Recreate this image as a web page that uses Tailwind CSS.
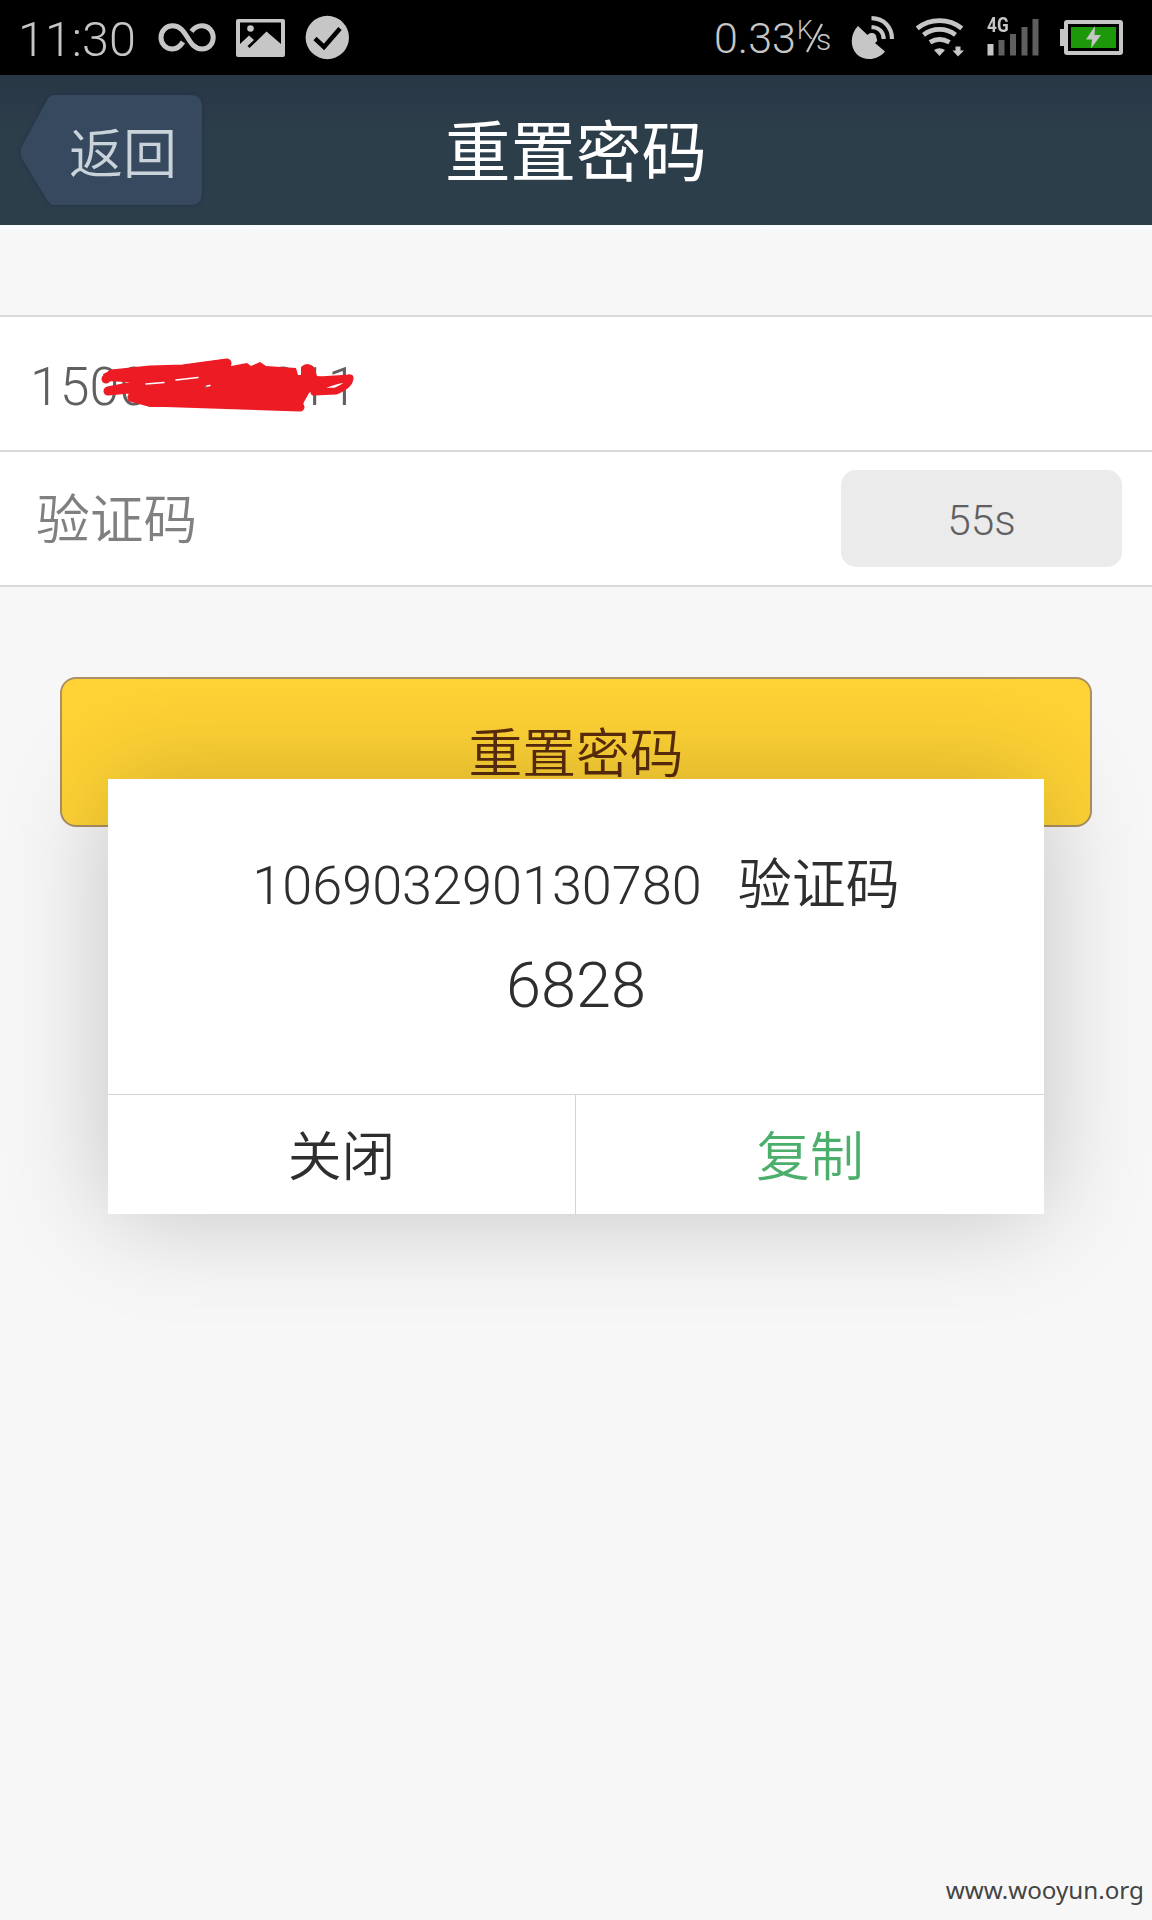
<!DOCTYPE html>
<html lang="zh-CN">
<head>
<meta charset="utf-8">
<title>重置密码</title>
<script src="https://cdn.jsdelivr.net/npm/@tailwindcss/browser@4"></script>
</head>
<body class="bg-[#f7f7f7]">
<div class="relative flex h-[1920px] w-[1152px] flex-col overflow-hidden bg-[#f7f7f7] font-['Roboto','Noto_Sans_CJK_SC',sans-serif] font-light">

  <!-- status bar -->
  <div class="flex h-[75px] items-center bg-black text-[#c6c6c6]">
    <span class="ml-[18px] w-[138px] pt-[4px] text-[48.500px] leading-[75px]">11:30</span>
    <svg class="h-[75px] w-[62px]" viewBox="156 0 62 75" fill="none" stroke="#c6c6c6" stroke-width="5"><path d="M183 42C180 46.500 176.500 49 172.500 49C166 49 161 44 161 37.500C161 31 166 25.800 172.500 25.800C188 25.800 187 49 202 49C208.500 49 213.200 44 213.200 37.500C213.200 31 208.500 25.800 202 25.800C197.500 25.800 194 28 191.500 31.500"/></svg>
    <svg class="ml-[16px] h-[75px] w-[53px]" viewBox="234 0 53 75"><rect x="236" y="19" width="49" height="38" rx="2" fill="#c6c6c6"/><path d="M240 22.500H281V44L266.500 31.500L249.500 48L247.500 46L254 40L249 35.500L240 44Z" fill="#000"/><circle cx="250.500" cy="28.500" r="3.300" fill="#c6c6c6"/></svg>
    <svg class="ml-[16px] h-[75px] w-[48px]" viewBox="303 0 48 75"><circle cx="327.300" cy="37.500" r="21.700" fill="#c6c6c6"/><path d="M315 38.500L324 47L340 28.500" fill="none" stroke="#000" stroke-width="4.500"/></svg>
    <span class="ml-[363px] w-[82px] pt-[1px] text-[43px] leading-[75px]">0.33</span>
    <span class="relative flex h-[75px] w-[41px]">
      <span class="absolute top-[17px] left-[1px] text-[25px] leading-[28px] font-light">K</span>
      <svg class="absolute top-[22px] left-[9px]" width="20" height="32" viewBox="0 0 20 32"><path d="M2 30L17 2" stroke="#c6c6c6" stroke-width="2.200"/></svg>
      <span class="absolute top-[24px] left-[20px] text-[30px] leading-[32px] font-light">s</span>
    </span>
    <svg class="ml-[13px] h-[75px] w-[46px]" viewBox="850 0 46 75" fill="#c6c6c6"><path d="M858 26L867.500 35C871 31.500 876.500 33 876.500 38C878 41 876.500 42 875 43L885 51.500C878 60.500 864 61.500 856.500 54C850 47 850 34 858 26Z"/><path d="M871.500 18.200C884 18.500 892 27 892 39" fill="none" stroke="#c6c6c6" stroke-width="4.200"/><path d="M871.500 27C879 27.500 883.500 32 883.700 39" fill="none" stroke="#c6c6c6" stroke-width="4.200"/></svg>
    <svg class="ml-[18px] h-[75px] w-[52px]" viewBox="914 0 52 75" fill="none" stroke="#c6c6c6" stroke-width="4.800"><path d="M917.200 28.300C930 18 949 18 961.800 28.300M923.500 34.800C933 27.500 946 27.500 955.500 34.800M930 42.300C936 38.500 943 38.500 949.500 42.300"/><path d="M934 50Q939.500 46.500 945 50L939.500 56Z" fill="#c6c6c6" stroke="none"/><path d="M955.500 46.500H960.500V50.500H964L958 56.500L952.500 50.500H955.500Z" fill="#c6c6c6" stroke="none"/></svg>
    <span class="relative ml-[20px] h-[75px] w-[56px]">
      <svg class="absolute top-0 left-0 h-[75px] w-[56px]" viewBox="986 0 56 75"><path fill="#c6c6c6" d="M987.500 44H993.500V55.500H987.500Z"/><path fill="#5f5f5f" d="M998.500 40H1004.500V55.500H998.500ZM1010 34H1016V55.500H1010ZM1021.500 27H1027.500V55.500H1021.500ZM1032.500 19H1038.500V55.500H1032.500Z"/></svg>
      <span class="absolute top-[13px] left-[1px] origin-left scale-x-[0.82] text-[21px] leading-[24px] font-bold">4G</span>
    </span>
    <svg class="ml-[16px] h-[75px] w-[68px]" viewBox="1058 0 68 75"><path fill="#c6c6c6" d="M1060 29H1065V46H1060Z"/><rect x="1066" y="22" width="55" height="31" rx="1" fill="#000" stroke="#c6c6c6" stroke-width="4"/><rect x="1071" y="27" width="45" height="21" fill="#1d980b"/><path fill="#c6c6c6" d="M1095 26L1086 39.500H1092L1091 48.500L1101 35H1094.500Z"/></svg>
  </div>

  <!-- title bar -->
  <div class="relative flex h-[150px] items-center justify-center bg-linear-to-b from-[#293745] to-[#2d3e4b] to-40%">
    <div class="absolute top-[15px] left-[15px] h-[120px] w-[192px]">
      <svg class="absolute inset-0 drop-shadow-[0_0_2px_#20304a]" width="192" height="120" viewBox="15 90 192 120"><path d="M54 95H191Q202 95 202 108V192Q202 205 191 205H54Q50 205 47 200L22 159Q19 152 22 146L47 100Q50 95 54 95Z" fill="#36495f"/></svg>
      <span class="absolute top-[26px] left-[54px] text-[54px] leading-[80px] font-[350] whitespace-nowrap text-[#cbd3da]">返回</span>
    </div>
    <h1 class="pt-[7px] text-[65.500px] leading-none font-normal text-white">重置密码</h1>
  </div>
  <div class="h-[5px] bg-[#f8fafe]"></div>

  <!-- form rows -->
  <div class="mt-[85px] flex flex-col border-y-2 border-[#dadada] bg-white">
    <div class="relative flex h-[133px] items-center pl-[30px]">
      <span class="pt-[7px] text-[53.700px] leading-[80px] text-[#606060]">15000000011</span>
      <svg class="absolute top-[35px] left-[95px]" width="265" height="85" viewBox="95 352 265 85" fill="none" stroke="#ed1c24" stroke-linecap="round" stroke-linejoin="round"><path stroke-width="9" d="M106 379L112 374L150 370L183 369L227 363L180 377L108 391L140 388L132 397L150 402L300 407"/><path fill="#ed1c24" stroke="none" d="M103 374L112 370L150 367L183 365L226 359L231 362L231 366L247 363L251 366L260 362L266 366L296 368L298 375L301 375V367Q307 361 314 367L317 376L330 378L309 393L304 402L301 410L297 411L252 409L248 407L150 407L128 401L130 395L145 386L143 383L106 381Z"/><path stroke-width="7" d="M304 381L350 378Q350 385 336 391L314 392Q322 383 349 378"/><path stroke="#fff" stroke-width="1.500" d="M146 384L164 382.500M176 380L198 377.500"/><path stroke="#777" stroke-width="2" d="M205.500 386.500L206 387"/><path stroke="#fff" stroke-width="1.500" d="M207 386L210 385.500"/></svg>
    </div>
    <div class="flex h-[135px] items-center justify-between border-t-2 border-[#dadada] pr-[30px] pl-[36px]">
      <span class="pt-[5px] text-[53.800px] leading-[80px] font-[350] text-[#808080]">验证码</span>
      <div class="flex h-[97px] w-[281px] items-center justify-center rounded-[15px] bg-[#ebebeb] pt-[5px] text-[42.400px] text-[#606060]">55s</div>
    </div>
  </div>

  <!-- submit button -->
  <div class="mx-[60px] mt-[90px] flex h-[150px] items-center justify-center rounded-[16px] border-2 border-[#ab9065] bg-[#ffd335] pt-[5px] text-[53.800px] leading-none font-[350] text-[#5a2d0c]">重置密码</div>

  <!-- verification code dialog -->
  <div class="absolute top-[779px] left-[108px] flex h-[435px] w-[936px] flex-col bg-white text-[#2e2e2e] shadow-[0_1px_100px_rgba(0,0,0,0.21)]">
    <div class="flex h-[315px] flex-col items-center pt-[66px]">
      <div class="flex items-center gap-[36px] text-[54px] leading-[80px]"><span>106903290130780</span><span class="pt-[1px] font-[350]">验证码</span></div>
      <div class="mt-[20px] text-[63px] leading-[80px]">6828</div>
    </div>
    <div class="flex h-[120px] border-t border-[#d4d4d4] text-[53.800px] font-[350]">
      <div class="flex w-[468px] items-center justify-center border-r border-[#d4d4d4] pt-[6px] leading-none">关闭</div>
      <div class="flex flex-1 items-center justify-center pt-[6px] leading-none text-[#4bae6b]">复制</div>
    </div>
  </div>

  <div class="mt-auto pr-[8px] pb-[12px] text-right font-['Noto_Sans','Open_Sans',sans-serif] text-[24.200px] leading-[36px] font-normal text-[#444]">www.wooyun.org</div>
</div>
</body>
</html>
